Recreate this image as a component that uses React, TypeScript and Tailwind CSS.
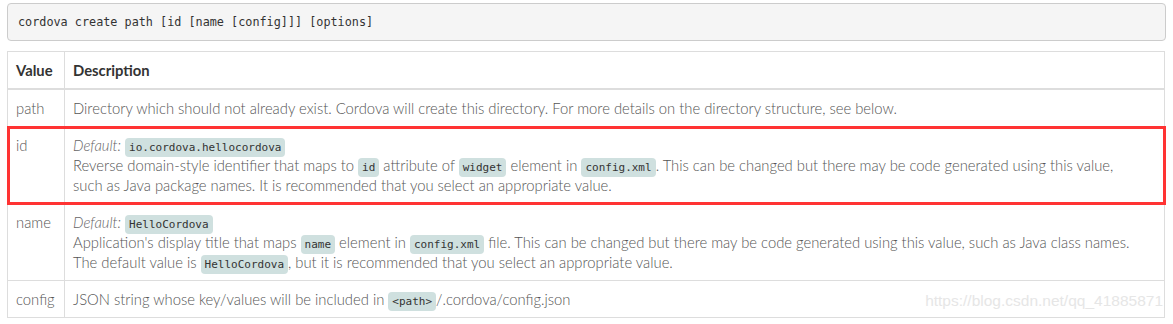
import type { ReactNode } from "react";

const C = ({ children }: { children: ReactNode }) => (
  <code className="rounded-[4px] bg-[#cfe0df] px-[4px] py-[3px] font-['DejaVu_Sans_Mono',monospace] text-[11px] leading-[10px] text-[#333]">
    {children}
  </code>
);

const Def = ({ children }: { children: ReactNode }) => (
  <>
    <em className="text-[#666]">Default:</em> <C>{children}</C>
    <br />
  </>
);

const rows: { name: string; desc: ReactNode; hl?: boolean }[] = [
  {
    name: "path",
    desc: "Directory which should not already exist. Cordova will create this directory. For more details on the directory structure, see below.",
  },
  {
    name: "id",
    hl: true,
    desc: (
      <>
        <Def>io.cordova.hellocordova</Def>
        Reverse domain-style identifier that maps to <C>id</C> attribute of <C>widget</C> element in{" "}
        <C>config.xml</C>. This can be changed but there may be code generated using this value,
        <br />
        such as Java package names. It is recommended that you select an appropriate value.
      </>
    ),
  },
  {
    name: "name",
    desc: (
      <>
        <Def>HelloCordova</Def>
        Application's display title that maps <C>name</C> element in <C>config.xml</C> file. This can be
        changed but there may be code generated using this value, such as Java class names.
        <br />
        The default value is <C>HelloCordova</C>, but it is recommended that you select an appropriate
        value.
      </>
    ),
  },
  {
    name: "config",
    desc: (
      <>
        JSON string whose key/values will be included in <C>&lt;path&gt;</C>/.cordova/config.json
      </>
    ),
  },
];

export default function App() {
  return (
    <div className="relative h-[324px] w-[1173px] bg-white px-[7px] pt-[3px] font-['Lato',sans-serif] text-[14.8px] font-light text-[#555]">
      <pre className="mb-[10px] rounded-[4px] border border-[#ccc] bg-[#f5f5f5] px-[10px] py-[10px] font-['DejaVu_Sans_Mono',monospace] text-[11.8px] leading-[16px] text-[#333]">
        cordova create path [id [name [config]]] [options]
      </pre>
      <table className="w-[1158px] border-collapse border border-[#ddd]">
        <thead>
          <tr className="border-b-2 border-[#ddd]">
            <th className="w-[57px] border-r border-[#ddd] px-[8px] py-[8px] text-left font-bold leading-[20px] text-[#333]">
              Value
            </th>
            <th className="px-[8px] py-[8px] text-left font-bold leading-[20px] text-[#333]">Description</th>
          </tr>
        </thead>
        <tbody>
          {rows.map((r) => (
            <tr
              key={r.name}
              className={r.hl ? "border-b border-[#ddd] outline-[3px] outline-[#f33] -outline-offset-[2px] outline" : "border-b border-[#ddd]"}
            >
              <td className="border-r border-[#ddd] px-[8px] py-[8px] align-top leading-[20px]">{r.name}</td>
              <td className="whitespace-nowrap px-[8px] py-[8px] align-top leading-[20px]">{r.desc}</td>
            </tr>
          ))}
        </tbody>
      </table>
      <div className="absolute right-[10px] bottom-[12px] font-['Liberation_Sans',sans-serif] text-[15.5px] text-[#e6e6e6]">
        https://blog.csdn.net/qq_41885871
      </div>
    </div>
  );
}
